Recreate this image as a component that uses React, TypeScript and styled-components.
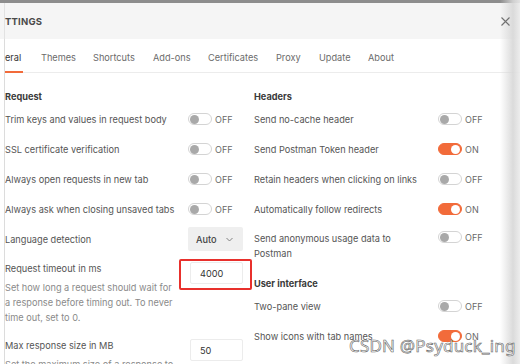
import React from "react";
import styled, { createGlobalStyle } from "styled-components";

const Global = createGlobalStyle`
  html, body { margin: 0; padding: 0; background: #fff; }
  body { font-family: Inter, "Noto Sans", sans-serif; -webkit-font-smoothing: antialiased; }
  * { box-sizing: border-box; }
`;

const Frame = styled.div`
  position: relative;
  width: 520px;
  height: 364px;
  overflow: hidden;
  display: flex;
  background: #fff;
`;

const LeftEdge = styled.div`
  width: 5px;
  flex: none;
  display: flex;
  flex-direction: column;
`;

const EdgeTop = styled.div`
  height: 3px;
  flex: none;
  background: #8d8d8d;
`;

const EdgeHead = styled.div`
  height: 36px;
  flex: none;
  background: #f5f5f5;
  border-right: 1px solid #e2e2e2;
`;

const EdgeBody = styled.div`
  flex: 1;
  border-right: 1px solid #dcdcdc;
`;

const Panel = styled.div`
  flex: 1;
  display: flex;
  flex-direction: column;
  min-width: 0;
`;

const TopBar = styled.div`
  height: 3px;
  flex: none;
  background: #8d8d8d;
`;

const Header = styled.div`
  height: 36px;
  flex: none;
  background: #f5f5f5;
  display: flex;
  align-items: center;
  justify-content: space-between;
  padding-right: 10px;
`;

const Title = styled.div`
  font-size: 9.5px;
  font-weight: 700;
  color: #4a4a4a;
  letter-spacing: 0.2px;
`;

const CloseSvg = styled.svg`
  position: relative;
  z-index: 2;
`;

const Tabs = styled.div`
  height: 34px;
  flex: none;
  display: flex;
  align-items: stretch;
  border-bottom: 1px solid #ececec;
`;

const Tab = styled.div<{ $active?: boolean; $w: number }>`
  width: ${(p) => p.$w}px;
  flex: none;
  display: flex;
  align-items: center;
  padding-top: 4px;
  font-size: 9.2px;
  color: ${(p) => (p.$active ? "#333" : "#6b6b6b")};
  position: relative;
  &::after {
    content: "";
    display: ${(p) => (p.$active ? "block" : "none")};
    position: absolute;
    left: 0;
    width: 18px;
    bottom: -1px;
    height: 2px;
    background: #f26b3a;
  }
`;

const Content = styled.div`
  flex: none;
  display: grid;
  grid-template-columns: 240px 241px;
  column-gap: 9px;
  padding-top: 15px;
`;

const Column = styled.div`
  display: flex;
  flex-direction: column;
`;

const Heading = styled.div<{ $top?: number }>`
  height: 16px;
  flex: none;
  margin-top: ${(p) => p.$top ?? 0}px;
  display: flex;
  align-items: center;
  font-size: 9.2px;
  font-weight: 700;
  color: #3a3a3a;
`;

const Row = styled.div`
  height: 30px;
  flex: none;
  display: flex;
  align-items: center;
  justify-content: space-between;
`;

const TallRow = styled.div`
  display: flex;
  flex: none;
  align-items: flex-start;
  justify-content: space-between;
  padding-top: 7px;
`;

const Label = styled.div`
  font-size: 9.2px;
  color: #555;
  line-height: 15px;
`;

const Control = styled.div`
  width: 57px;
  flex: none;
  display: flex;
  align-items: center;
`;

const ToggleTrack = styled.div<{ $on: boolean }>`
  width: 24px;
  height: 12px;
  border-radius: 6px;
  border: 1px solid ${(p) => (p.$on ? "#f26b3a" : "#d4d4d4")};
  background: ${(p) => (p.$on ? "#f26b3a" : "#fff")};
  display: flex;
  align-items: center;
  justify-content: ${(p) => (p.$on ? "flex-end" : "flex-start")};
  padding: 0 1px;
`;

const Knob = styled.div<{ $on: boolean }>`
  width: 9px;
  height: 9px;
  border-radius: 50%;
  background: ${(p) => (p.$on ? "#fff" : "#a9a9a9")};
`;

const ToggleText = styled.span`
  font-size: 9px;
  color: #6a6a6a;
  margin-left: 3px;
`;

const Select = styled.div`
  width: 55px;
  height: 24px;
  background: #efefef;
  border-radius: 2px;
  display: flex;
  align-items: center;
  padding-left: 8px;
  gap: 9px;
  font-size: 9.2px;
  font-weight: 500;
  color: #444;
`;

const InputBox = styled.div`
  width: 53px;
  height: 22px;
  border: 1px solid #ececec;
  border-radius: 2px;
  display: flex;
  align-items: center;
  padding-left: 9px;
  font-size: 9.2px;
  color: #333;
  background: #fff;
`;

const Highlight = styled.div`
  position: relative;
  &::before {
    content: "";
    position: absolute;
    left: -11px;
    top: -3px;
    width: 69px;
    height: 27px;
    border: 2px solid #e8302c;
    border-radius: 2px;
  }
`;

const FieldBlock = styled.div<{ $top?: number }>`
  display: flex;
  flex: none;
  justify-content: space-between;
  align-items: flex-start;
  margin-top: ${(p) => p.$top ?? 0}px;
`;

const FieldText = styled.div`
  width: 172px;
`;

const FieldTitle = styled.div`
  font-size: 9.2px;
  color: #555;
  line-height: 16px;
`;

const Desc = styled.div`
  font-size: 9.2px;
  color: #8a8a8a;
  line-height: 15px;
  margin-top: 3px;
`;

const InputSlot = styled.div`
  width: 55px;
  flex: none;
  display: flex;
  padding-top: 1px;
`;

const Shadow = styled.div`
  position: absolute;
  right: 0;
  top: 0;
  bottom: 0;
  width: 20px;
  background: linear-gradient(to right, rgba(255,255,255,0) 0%, rgba(215,215,215,0.9) 65%, rgba(235,235,235,0.9) 100%);
  pointer-events: none;
`;

const Watermark = styled.div`
  position: absolute;
  left: 349px;
  top: 334px;
  font-family: "Noto Sans", "DejaVu Sans", sans-serif;
  font-size: 17px;
  color: rgba(255, 255, 255, 0.8);
  -webkit-text-stroke: 0.6px #666;
  letter-spacing: 0.2px;
  white-space: nowrap;
`;

const CloseIcon = () => (
  <CloseSvg width="9" height="9" viewBox="0 0 9 9">
    <path d="M0.5 0.5 L8.5 8.5 M8.5 0.5 L0.5 8.5" stroke="#707070" strokeWidth="1.1" />
  </CloseSvg>
);

const Chevron = () => (
  <svg width="7" height="5" viewBox="0 0 7 5">
    <path d="M0.5 1 L3.5 4 L6.5 1" fill="none" stroke="#777" strokeWidth="0.9" />
  </svg>
);

const Toggle = ({ on }: { on: boolean }) => (
  <Control>
    <ToggleTrack $on={on}>
      <Knob $on={on} />
    </ToggleTrack>
    <ToggleText>{on ? "ON" : "OFF"}</ToggleText>
  </Control>
);

const tabs: [string, number, boolean?][] = [
  ["eral", 36, true],
  ["Themes", 52],
  ["Shortcuts", 60],
  ["Add-ons", 55],
  ["Certificates", 68],
  ["Proxy", 43],
  ["Update", 49],
  ["About", 40],
];

export default function App() {
  return (
    <Frame>
      <Global />
      <LeftEdge>
        <EdgeTop />
        <EdgeHead />
        <EdgeBody />
      </LeftEdge>
      <Panel>
        <TopBar />
        <Header>
          <Title>TTINGS</Title>
          <CloseIcon />
        </Header>
        <Tabs>
          {tabs.map(([t, w, a]) => (
            <Tab key={t} $w={w} $active={a}>
              {t}
            </Tab>
          ))}
        </Tabs>
        <Content>
          <Column>
            <Heading>Request</Heading>
            <Row>
              <Label>Trim keys and values in request body</Label>
              <Toggle on={false} />
            </Row>
            <Row>
              <Label>SSL certificate verification</Label>
              <Toggle on={false} />
            </Row>
            <Row>
              <Label>Always open requests in new tab</Label>
              <Toggle on={false} />
            </Row>
            <Row>
              <Label>Always ask when closing unsaved tabs</Label>
              <Toggle on={false} />
            </Row>
            <Row>
              <Label>Language detection</Label>
              <Control>
                <Select>
                  Auto <Chevron />
                </Select>
              </Control>
            </Row>
            <FieldBlock $top={7}>
              <FieldText>
                <FieldTitle>Request timeout in ms</FieldTitle>
                <Desc>
                  Set how long a request should wait for a response before timing out. To never time out, set to 0.
                </Desc>
              </FieldText>
              <InputSlot>
                <Highlight>
                  <InputBox>4000</InputBox>
                </Highlight>
              </InputSlot>
            </FieldBlock>
            <FieldBlock $top={13}>
              <FieldText>
                <FieldTitle>Max response size in MB</FieldTitle>
                <Desc>Set the maximum size of a response to</Desc>
              </FieldText>
              <InputSlot>
                <InputBox>50</InputBox>
              </InputSlot>
            </FieldBlock>
          </Column>
          <Column>
            <Heading>Headers</Heading>
            <Row>
              <Label>Send no-cache header</Label>
              <Toggle on={false} />
            </Row>
            <Row>
              <Label>Send Postman Token header</Label>
              <Toggle on={true} />
            </Row>
            <Row>
              <Label>Retain headers when clicking on links</Label>
              <Toggle on={false} />
            </Row>
            <Row>
              <Label>Automatically follow redirects</Label>
              <Toggle on={true} />
            </Row>
            <TallRow>
              <Label>
                Send anonymous usage data to
                <br />
                Postman
              </Label>
              <Toggle on={false} />
            </TallRow>
            <Heading $top={14}>User interface</Heading>
            <Row>
              <Label>Two-pane view</Label>
              <Toggle on={false} />
            </Row>
            <Row>
              <Label>Show icons with tab names</Label>
              <Toggle on={true} />
            </Row>
          </Column>
        </Content>
      </Panel>
      <Shadow />
      <Watermark>CSDN @Psyduck_ing</Watermark>
    </Frame>
  );
}
